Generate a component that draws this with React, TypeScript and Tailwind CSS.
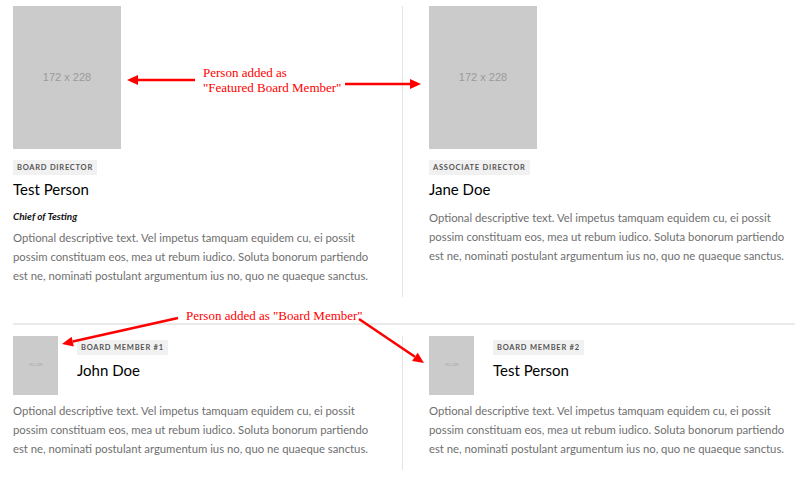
import type * as React from "react";

type Person = {
  role: string;
  name: string;
  title?: string;
};

const BLURB =
  "Optional descriptive text. Vel impetus tamquam equidem cu, ei possit possim constituam eos, mea ut rebum iudico. Soluta bonorum partiendo est ne, nominati postulant argumentum ius no, quo ne quaeque sanctus.";

const featured: Person[] = [
  { role: "Board Director", name: "Test Person", title: "Chief of Testing" },
  { role: "Associate Director", name: "Jane Doe" },
];

const members: Person[] = [
  { role: "Board Member #1", name: "John Doe" },
  { role: "Board Member #2", name: "Test Person" },
];

function Placeholder({ small }: { small?: boolean }) {
  return (
    <div
      className={
        small
          ? "flex h-[59px] w-[45px] shrink-0 items-center justify-center bg-[#cbcbcb] text-[3px] text-[#9a9a9a]"
          : "flex h-[143px] w-[108px] shrink-0 items-center justify-center bg-[#cbcbcb] text-[11px] text-[#9a9a9a]"
      }
      style={{ fontFamily: "'Liberation Sans', Arial, sans-serif" }}
    >
      172 x 228
    </div>
  );
}

function Badge({ children }: { children: React.ReactNode }) {
  return (
    <span className="block self-start bg-[#f1f1f1] px-[4px] py-[3px] text-[7.5px] leading-[9px] font-bold uppercase tracking-[0.1em] text-[#555]">
      {children}
    </span>
  );
}

function Blurb() {
  return <p className="text-[11.3px] leading-[19px] text-[#6f6f6f]">{BLURB}</p>;
}

function FeaturedCard({ person }: { person: Person }) {
  return (
    <div className="flex flex-col items-start">
      <Placeholder />
      <div className="mt-[11px] flex">
        <Badge>{person.role}</Badge>
      </div>
      <h3 className="mt-[4px] text-[15px] leading-[20px] font-normal text-black">{person.name}</h3>
      {person.title ? (
        <>
          <p className="mt-[10px] text-[10px] leading-[14px] font-bold italic text-[#111]">{person.title}</p>
          <div className="mt-[5px]">
            <Blurb />
          </div>
        </>
      ) : (
        <div className="mt-[9px]">
          <Blurb />
        </div>
      )}
    </div>
  );
}

function MemberCard({ person }: { person: Person }) {
  return (
    <div className="flex flex-col">
      <div className="flex items-start gap-[19px]">
        <Placeholder small />
        <div className="flex flex-col items-start pt-[4px]">
          <Badge>{person.role}</Badge>
          <h3 className="mt-[5px] text-[15px] leading-[20px] font-normal text-black">{person.name}</h3>
        </div>
      </div>
      <div className="mt-[6px]">
        <Blurb />
      </div>
    </div>
  );
}

function Arrow({ x1, y1, x2, y2 }: { x1: number; y1: number; x2: number; y2: number }) {
  const a = Math.atan2(y2 - y1, x2 - x1);
  const len = 11;
  const w = 5;
  const bx = x2 - len * Math.cos(a);
  const by = y2 - len * Math.sin(a);
  const px = -Math.sin(a) * w;
  const py = Math.cos(a) * w;
  return (
    <g>
      <line x1={x1} y1={y1} x2={bx} y2={by} stroke="#f00" strokeWidth={2.5} />
      <polygon points={`${x2},${y2} ${bx + px},${by + py} ${bx - px},${by - py}`} fill="#f00" />
    </g>
  );
}

export default function App() {
  return (
    <div
      className="relative h-[493px] w-[800px] overflow-hidden bg-white px-[13px]"
      style={{ fontFamily: "Lato, 'Open Sans', sans-serif" }}
    >
      <section className="grid grid-cols-[390px_1fr] pt-[6px]">
        <div className="border-r border-[#e4e4e4] pr-[20px] pb-[12px]">
          <FeaturedCard person={featured[0]} />
        </div>
        <div className="pl-[26px]">
          <FeaturedCard person={featured[1]} />
        </div>
      </section>

      <hr className="-mr-[8px] mt-[26px] border-t-2 border-[#eaeaea]" />

      <section className="mt-[11px] grid grid-cols-[390px_1fr]">
        <div className="border-r border-[#e4e4e4] pr-[20px] pb-[12px]">
          <MemberCard person={members[0]} />
        </div>
        <div className="pl-[26px]">
          <MemberCard person={members[1]} />
        </div>
      </section>

      {/* annotations laid over the page */}
      <div
        className="pointer-events-none absolute inset-0 text-[13px] leading-[15px] text-[#f00]"
        style={{ fontFamily: "'Liberation Serif', 'Times New Roman', serif" }}
      >
        <div className="absolute top-[65px] left-[203px]">
          Person added as
          <br />
          "Featured Board Member"
        </div>
        <div className="absolute top-[308px] left-[186px]">Person added as "Board Member"</div>
        <svg className="absolute inset-0" width={800} height={493}>
          <Arrow x1={195} y1={80} x2={127} y2={80} />
          <Arrow x1={345} y1={84} x2={421} y2={84} />
          <Arrow x1={178} y1={318} x2={62} y2={344} />
          <Arrow x1={359} y1={319} x2={424} y2={363} />
        </svg>
      </div>
    </div>
  );
}
